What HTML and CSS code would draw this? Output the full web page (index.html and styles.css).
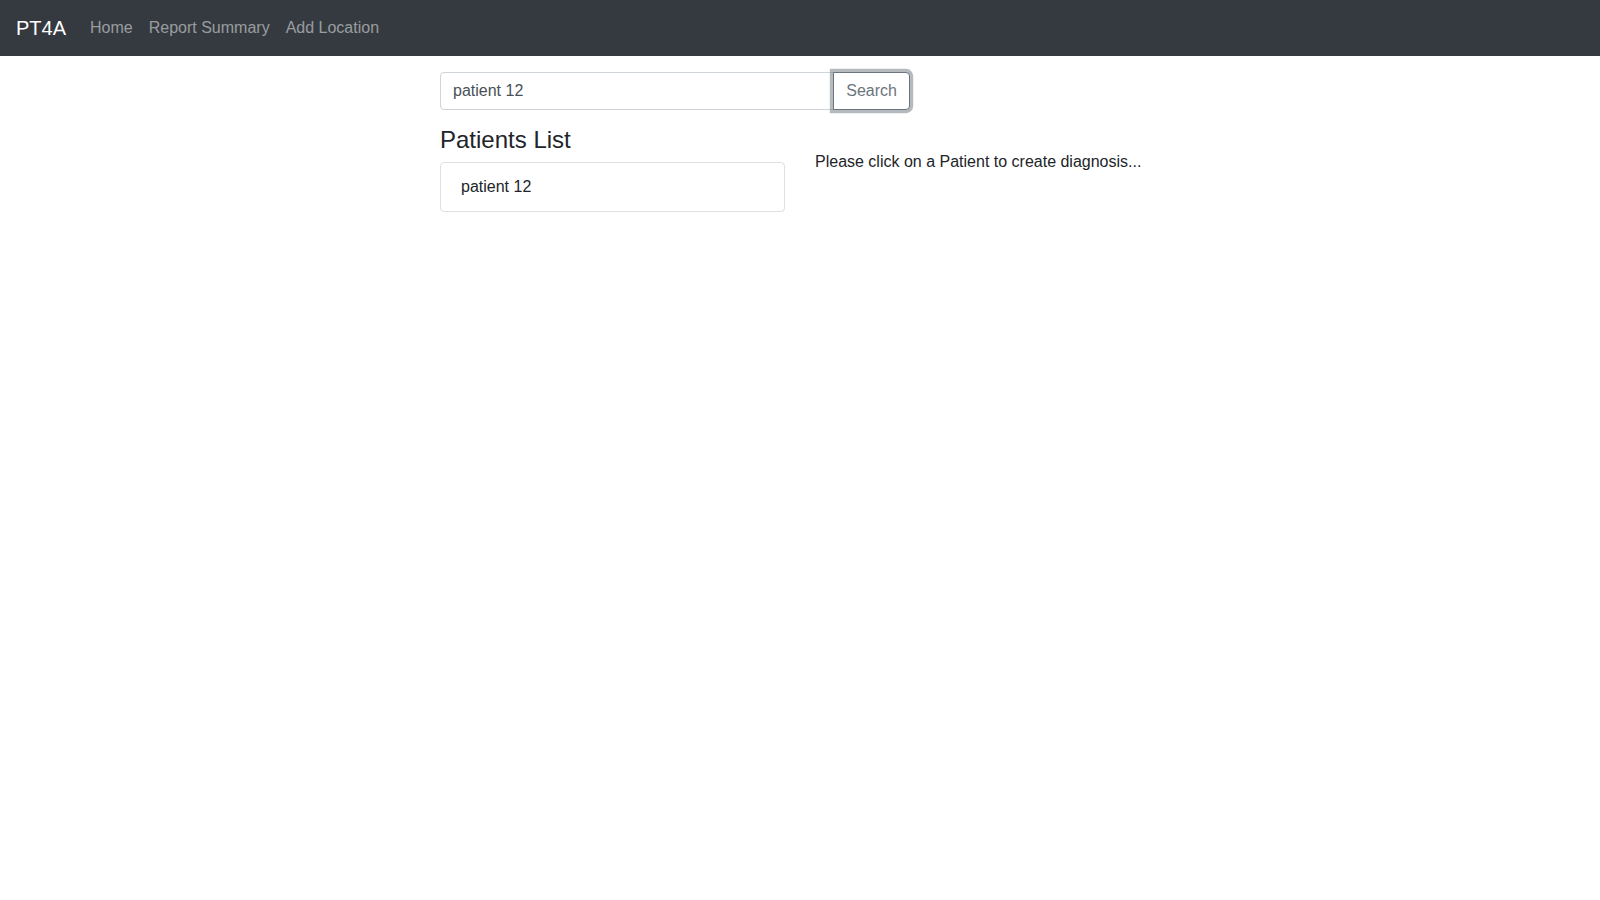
FILE: index.html
```html
<!DOCTYPE html>
<html lang="en">
<head>
<meta charset="utf-8">
<title>PT4A</title>
<link rel="stylesheet" href="styles.css">
</head>
<body>
<nav class="navbar">
  <a class="brand" href="#">PT4A</a>
  <ul class="nav">
    <li><a class="nav-link" href="#">Home</a></li>
    <li><a class="nav-link" href="#">Report Summary</a></li>
    <li><a class="nav-link" href="#">Add Location</a></li>
  </ul>
</nav>
<main class="container">
  <form class="search-row">
    <div class="input-group">
      <input class="form-control" type="text" value="patient 12">
      <button class="btn" type="button">Search</button>
    </div>
  </form>
  <div class="row">
    <section class="col">
      <h4 class="title">Patients List</h4>
      <ul class="list-group">
        <li class="list-item">patient 12</li>
      </ul>
    </section>
    <section class="col">
      <p class="hint">Please click on a Patient to create diagnosis...</p>
    </section>
  </div>
</main>
</body>
</html>
```
FILE: styles.css
```css
* { box-sizing: border-box; }
html, body { margin: 0; padding: 0; }
body {
  font-family: "Liberation Sans", Arial, sans-serif;
  font-size: 16px;
  line-height: 1.5;
  color: #212529;
  background: #fff;
}
.navbar {
  display: flex;
  align-items: center;
  height: 56px;
  padding: 8px 16px;
  background: #343a40;
}
.brand {
  font-size: 20px;
  line-height: 30px;
  color: #fff;
  text-decoration: none;
  margin-right: 16px;
}
.nav {
  display: flex;
  list-style: none;
  margin: 0;
  padding: 0;
}
.nav-link {
  display: block;
  padding: 8px;
  color: rgba(255,255,255,.5);
  text-decoration: none;
}
.container {
  width: 720px;
  margin: 0 auto;
  padding: 16px 0 0;
}
.search-row {
  width: 470px;
  margin: 0 0 16px;
}
.input-group {
  display: flex;
  height: 38px;
}
.form-control {
  flex: 1;
  min-width: 0;
  height: 38px;
  padding: 6px 12px;
  font: inherit;
  color: #495057;
  border: 1px solid #ced4da;
  border-radius: 4px 0 0 4px;
  outline: none;
}
.btn {
  height: 38px;
  margin-left: -1px;
  padding: 6px 12px;
  font: inherit;
  color: #6c757d;
  background: #fff;
  border: 1px solid #6c757d;
  border-radius: 0 4px 4px 0;
  box-shadow: 0 0 0 3.2px rgba(108,117,125,.5);
  position: relative;
  z-index: 2;
}
.row {
  display: flex;
  gap: 30px;
}
.col {
  flex: 1;
}
.title {
  font-size: 24px;
  font-weight: 500;
  line-height: 1.2;
  margin: 0 0 7px;
}
.list-group {
  list-style: none;
  margin: 0;
  padding: 0;
}
.list-item {
  padding: 12px 20px;
  border: 1px solid rgba(0,0,0,.125);
  border-radius: 4px;
}
.hint {
  margin: 24px 0 0;
}
```
